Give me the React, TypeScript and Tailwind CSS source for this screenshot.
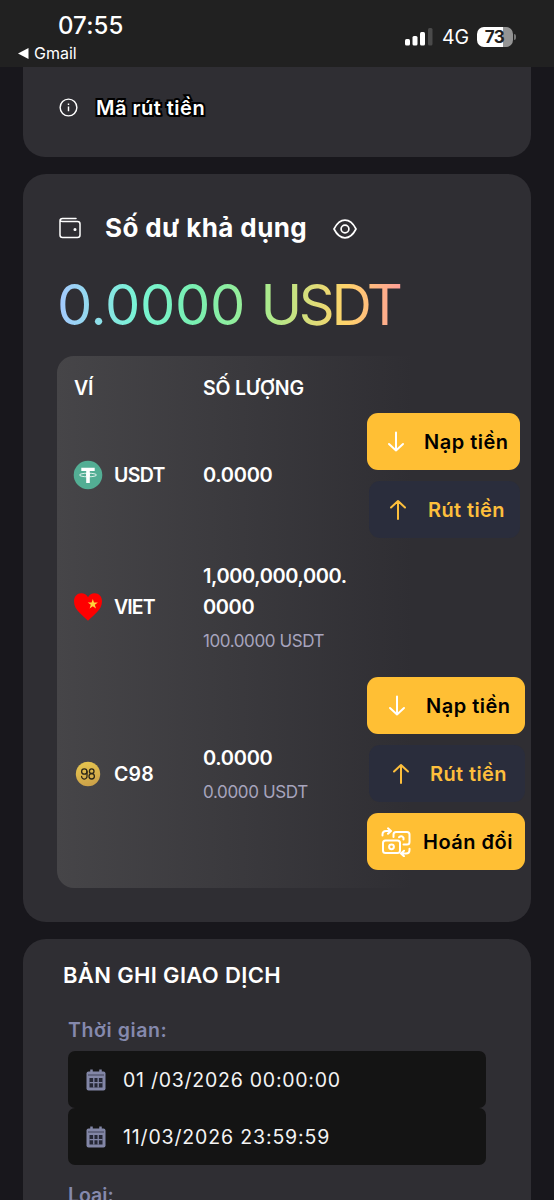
import React from "react";

function ArrowIcon({ up = false, className }: { up?: boolean; className: string }) {
  return (
    <svg viewBox="0 0 20 22" className={`h-[22px] w-5 shrink-0 ${className}`} fill="none" stroke="currentColor" strokeWidth="2" strokeLinecap="round" strokeLinejoin="round">
      {up ? <path d="M10 20V2M3 8.5 10 2l7 6.5" /> : <path d="M10 1.5v18M3 13l7 6.5 7-6.5" />}
    </svg>
  );
}

function SwapIcon() {
  return (
    <svg viewBox="0 0 30 30" className="h-[30px] w-[30px] shrink-0 text-white" fill="none" stroke="currentColor" strokeWidth="2" strokeLinecap="round" strokeLinejoin="round">
      <rect x="2" y="13.5" width="17" height="12.5" rx="2.5" />
      <circle cx="10.500" cy="19.800" r="2.400" />
      <path d="M12.500 10V7.500Q12.500 5 15 5H26Q28.500 5 28.500 7.500V15Q28.500 17.500 26 17.500H22.500" />
      <path d="M18 10.300Q20.500 7.800 22.500 10.800V12.500" />
      <path d="M1.500 8.500V7.500Q1.500 4 5 4H9.500M7 1.300l3 2.700L7 6.800" />
      <path d="M28.500 21.800V23Q28.500 26.500 25 26.500H20.500M23 23.700 20 26.500l3 2.700" />
    </svg>
  );
}

function CalendarIcon() {
  return (
    <svg viewBox="0 0 20 22" className="h-[22px] w-5 shrink-0">
      <rect x="0.500" y="2.500" width="19" height="19" rx="2" fill="#8286a6" />
      <path d="M5.500 0.500v4M14.500 0.500v4" stroke="#8286a6" strokeWidth="2.500" />
      <path d="M2 6h16" stroke="#4c4e66" strokeWidth="1.200" />
      <rect x="3.500" y="9" width="13" height="9.500" fill="#252735" />
      <path d="M3.500 13.700h13M7.800 9v9.500M12.200 9v9.500" stroke="#8286a6" strokeWidth="1.300" />
    </svg>
  );
}

function StatusBar() {
  return (
    <header className="flex h-[67px] justify-between bg-[#212121] font-[Inter,sans-serif] text-white">
      <div className="pl-[18px] pt-3">
        <div className="pl-10 text-[24px] font-medium leading-7 tracking-[0.1px]">07:55</div>
        <div className="flex items-center gap-[5px] text-[16px] leading-[26px]">
          <svg viewBox="0 0 11 11" className="h-[11px] w-[11px]"><path d="M0 5.500 10.500 0v11z" fill="currentColor" /></svg>
          <span>Gmail</span>
        </div>
      </div>
      <div className="flex h-[74px] items-center pr-[41px]">
        <svg viewBox="0 0 28 18" className="h-[18px] w-7" fill="currentColor">
          <rect x="0" y="11" width="5" height="6.500" rx="1.500" />
          <rect x="7.500" y="8" width="5" height="9.500" rx="1.500" />
          <rect x="15" y="4" width="5" height="13.500" rx="1.500" />
          <rect x="23" y="0" width="4.500" height="17.500" rx="1.500" fill="#4a4a4a" />
        </svg>
        <span className="ml-[9px] w-[27px] text-[19.500px] leading-5 tracking-[-0.2px]">4G</span>
        <div className="relative ml-2 flex h-5 w-[36px] items-center justify-center rounded-[7px] bg-[linear-gradient(90deg,#fff_73%,#949494_73%)] pr-[1px] text-[17px] font-bold leading-5 tracking-[-0.5px] text-[#212121]">
          73
          <i className="absolute -right-[3px] top-[7px] h-[6px] w-[2px] rounded-r bg-[#777]" />
        </div>
      </div>
    </header>
  );
}

function Coin({ kind }: { kind: string }) {
  if (kind === "USDT")
    return (
      <svg viewBox="0 0 30 30" className="h-[30px] w-[30px]">
        <circle cx="15" cy="15" r="14.300" fill="#53ae94" />
        <path d="M8.300 7.700h13.400v3.300h-4.900v12h-3.600V11H8.300z" fill="#fff" />
        <ellipse cx="15" cy="15" rx="8.600" ry="1.800" fill="none" stroke="#fff" strokeWidth="0.800" />
        <path d="M13.200 13h3.600v3h-3.600z" fill="#fff" />
      </svg>
    );
  if (kind === "VIET")
    return (
      <svg viewBox="0 0 30 30" className="h-[30px] w-[30px]">
        <path d="M15 28.800C10 23 1 18.500 1 9.200 1 4.500 4.200 1.300 8.300 1.300c3 0 5.300 1.500 6.700 3.900 1.400-2.400 3.700-3.900 6.700-3.900 4.100 0 7.300 3.200 7.300 7.900 0 9.300-9 13.800-14 19.600z" fill="#fe0000" />
        <path d="m19.800 7 1.200 3.500h3.900l-3.100 2.300 1.200 3.700-3.200-2.200-3.200 2.200 1.200-3.700-3.100-2.300h3.900z" fill="#ffd43b" />
      </svg>
    );
  return (
    <svg viewBox="0 0 30 30" className="h-[30px] w-[30px]">
      <defs>
        <linearGradient id="gold" x1="0" y1="0" x2="0.300" y2="1">
          <stop offset="0" stopColor="#e9c94f" />
          <stop offset="1" stopColor="#cda349" />
        </linearGradient>
      </defs>
      <circle cx="15" cy="15" r="12.200" fill="url(#gold)" />
      <g fill="none" stroke="#2b2618" strokeWidth="1.300" strokeLinecap="round">
        <circle cx="11.300" cy="12.500" r="2.700" />
        <path d="M14 12.500v4.700a2.700 2.700 0 0 1-5.400 0.300" />
        <circle cx="18.700" cy="17.300" r="2.700" />
        <circle cx="18.700" cy="12.200" r="2.300" />
      </g>
    </svg>
  );
}

function WalletName({ name, tracking }: { name: string; tracking: string }) {
  return (
    <div className="-ml-px flex items-center gap-[11px]">
      <Coin kind={name} />
      <span className={`text-[19.500px] font-semibold leading-[30px] ${tracking}`}>{name}</span>
    </div>
  );
}

function DateField({ children, tracking }: { children: string; tracking: string }) {
  return (
    <div className="flex h-[57px] items-center rounded-[7px] bg-[#141414] pl-[18px]">
      <CalendarIcon />
      <span className={`ml-[17px] whitespace-pre text-[19.500px] leading-7 text-[#f4f4f4] ${tracking}`}>{children}</span>
    </div>
  );
}

const depositClass = "flex h-[57px] items-center rounded-[11px] bg-[#ffbf34] text-[20px] font-semibold tracking-[0.5px] text-black whitespace-nowrap";
const withdrawClass = "flex h-[57px] items-center rounded-[11px] bg-[#2a2d3c] text-[20px] font-semibold tracking-[0.4px] text-[#fdbf3c] whitespace-nowrap";

export default function App() {
  return (
    <main className="h-[1200px] w-[554px] overflow-hidden bg-[#18171c] font-[Inter,sans-serif] text-white">
      <StatusBar />

      <section className="mx-[23px] flex h-[90px] items-center rounded-b-[22px] bg-[#2f2e33] pb-[9px] pl-9">
        <svg viewBox="0 0 20 20" className="h-[19px] w-[19px]" fill="none" stroke="currentColor" strokeWidth="1.500">
          <circle cx="10" cy="10" r="8.800" />
          <path d="M10 9v5M10 5.800v1.600" />
        </svg>
        <span className="ml-[18px] text-[20px] font-semibold leading-7 tracking-[0.5px] [paint-order:stroke_fill] [-webkit-text-stroke:4px_#000]">Mã rút tiền</span>
      </section>

      <section className="mx-[23px] mt-[17px] h-[748px] rounded-[23px] bg-[#2f2e33] pl-[34px]">
        <div className="flex h-[107px] items-center">
          <svg viewBox="0 0 23 22" className="ml-[2px] h-[22px] w-[23px]" fill="none" stroke="currentColor" strokeWidth="1.500" strokeLinecap="round">
            <path d="M17 1.500H3.500Q1 1.500 1 4v14q0 2.500 2.500 2.500h15q2.500 0 2.500-2.500V7q0-2.500-2.500-2.500h-15Q1 4.500 1 3" />
            <circle cx="16" cy="12.500" r="0.800" fill="currentColor" />
          </svg>
          <h2 className="ml-[23px] w-[204px] whitespace-nowrap text-[26px] font-bold leading-9 tracking-[0.4px]">Số dư khả dụng</h2>
          <svg viewBox="0 0 24 20" className="ml-6 mt-[3px] h-5 w-6" fill="none" stroke="currentColor" strokeWidth="1.700">
            <path d="M1 10Q5.500 1.200 12 1.200T23 10Q18.500 18.800 12 18.800T1 10Z" strokeLinejoin="round" />
            <circle cx="12" cy="10" r="3.900" />
          </svg>
        </div>
        <div className="-mt-[6px] h-[81px] w-[348px] whitespace-nowrap bg-[linear-gradient(90deg,#a5c8ff_0%,#78f4d4_23%,#79efb0_40%,#a1ec91_58%,#ffd36a_83%,#ff9b9b_100%)] bg-clip-text text-[56px] font-normal leading-[60px] text-transparent">
          <span className="tracking-[-0.3px]">0.0000 </span><span className="tracking-[-3.4px]">USDT</span>
        </div>

        <div className="grid h-[532px] w-[474px] grid-cols-[129px_164px_1fr] grid-rows-[52px_137px_126px_217px] rounded-[17px] bg-[linear-gradient(90deg,#464548_0%,#2f2e33_75%)] pl-[17px]">
          <div className="pt-[17px] text-[19.500px] font-semibold leading-[30px] tracking-[-0.3px]">VÍ</div>
          <div className="col-span-2 pt-[17px] text-[19.500px] font-semibold leading-[30px] tracking-[-0.2px]">SỐ LƯỢNG</div>

          <div className="pt-[52px]"><WalletName name="USDT" tracking="tracking-[-0.7px]" /></div>
          <div className="pt-[52px] text-[20px] font-semibold leading-[30px] tracking-[-0.3px]">0.0000</div>
          <div className="w-[153px] pt-[5px]">
            <div className={depositClass + " pl-[19px]"}><ArrowIcon className="text-white" /><span className="ml-[18px]">Nạp tiền</span></div>
            <div className={withdrawClass + " ml-[2px] mt-[11px] pl-[19px]"}><ArrowIcon up className="" /><span className="ml-5">Rút tiền</span></div>
          </div>

          <div className="pt-[47px]"><WalletName name="VIET" tracking="tracking-[-0.9px]" /></div>
          <div className="pt-4">
            <div className="text-[20px] font-semibold leading-[31px] tracking-[-0.4px]">1,000,000,000.<br />0000</div>
            <div className="mt-[4px] text-[17px] leading-[28px] tracking-[-0.4px] text-[#a7a4bd]">100.0000 USDT</div>
          </div>
          <div />

          <div className="pt-[88px]"><WalletName name="C98" tracking="tracking-[0.2px]" /></div>
          <div className="pt-[72px]">
            <div className="text-[20px] font-semibold leading-[31px] tracking-[-0.3px]">0.0000</div>
            <div className="mt-[4px] text-[17px] leading-[28px] tracking-[-0.35px] text-[#a7a4bd]">0.0000 USDT</div>
          </div>
          <div className="w-[158px] pt-[6px]">
            <div className={depositClass + " pl-5"}><ArrowIcon className="text-white" /><span className="ml-[19px]">Nạp tiền</span></div>
            <div className={withdrawClass + " ml-[2px] mt-[11px] pl-[22px]"}><ArrowIcon up className="" /><span className="ml-[19px]">Rút tiền</span></div>
            <div className={depositClass + " mt-[11px] pl-[14px]"}><SwapIcon /><span className="ml-3">Hoán đổi</span></div>
          </div>
        </div>
      </section>

      <section className="mx-[23px] mt-[17px] h-[300px] rounded-t-[23px] bg-[#2f2e33] pl-10 pt-[20px]">
        <h2 className="text-[22px] font-semibold leading-8 tracking-[0.35px]">BẢN GHI GIAO DỊCH</h2>
        <div className="ml-[5px] w-[418px]">
          <div className="mt-[25px] text-[19.500px] font-semibold leading-7 tracking-[0.6px] text-[#8589ad]">Thời gian:</div>
          <div className="mt-[7px]">
            <DateField tracking="tracking-[0.75px]">01 /03/2026 00:00:00</DateField>
            <DateField tracking="tracking-[0.85px]">11/03/2026 23:59:59</DateField>
          </div>
          <div className="mt-[16px] text-[19.500px] font-semibold leading-7 text-[#8589ad]">Loại:</div>
        </div>
      </section>
    </main>
  );
}
